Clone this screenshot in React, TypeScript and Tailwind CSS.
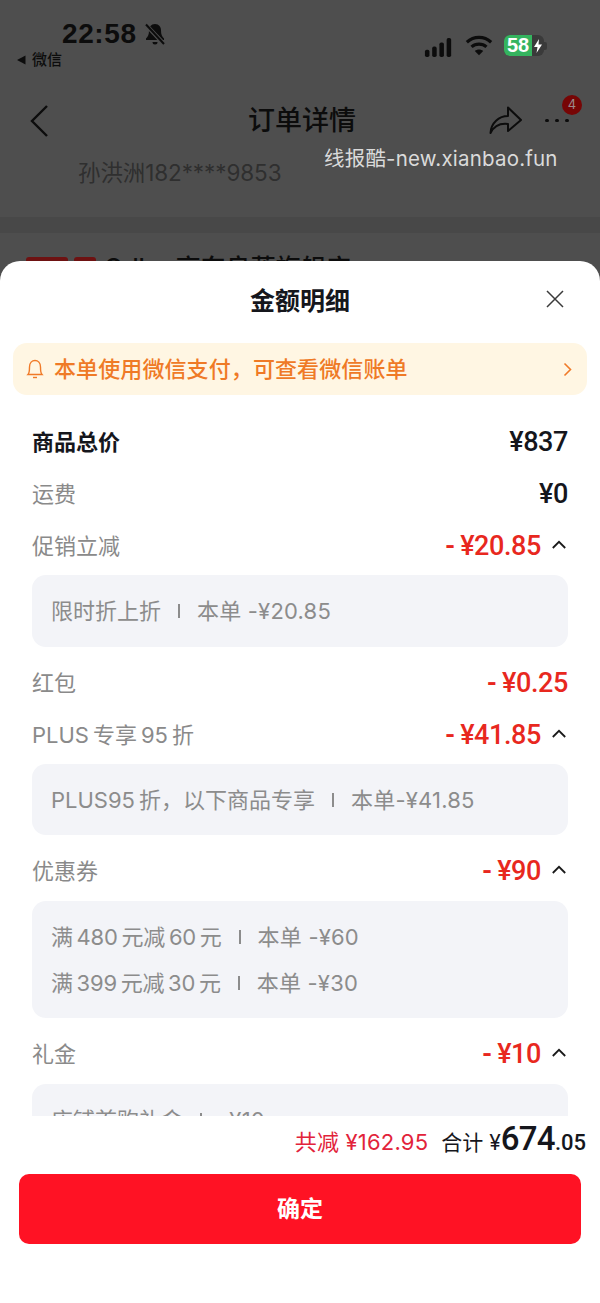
import React from "react";

const font = "font-['Inter','Noto_Sans_CJK_SC',sans-serif]";

function Chevron() {
  return (
    <svg width="14" height="9" viewBox="0 0 14 9" fill="none" stroke="#1a1a1a" strokeWidth="1.8" className="ml-[11px] mr-[2px] mb-[4px]">
      <path d="M0.800 8 L7 1.800 L13.200 8" />
    </svg>
  );
}

function Row({ label, value, strong, red, open }: { label: string; value: string; strong?: boolean; red?: boolean; open?: boolean }) {
  return (
    <div className="flex h-[52px] items-center justify-between">
      <span className={strong ? "text-[22px] font-bold text-[#15161c]" : "text-[22px] text-[#8a8a8a]"}>{label}</span>
      <span className="flex items-center">
        {red && <span className="mr-[5px] font-['Roboto',sans-serif] text-[26px] font-bold leading-[32px] text-[#e8281e]">-</span>}
        <span className={`font-['Roboto',sans-serif] text-[27px] font-medium leading-[32px] tracking-[-0.4px] ${red ? "text-[#e8281e]" : "text-[#15161c]"}`}>{value}</span>
        {open && <Chevron />}
      </span>
    </div>
  );
}

function Line({ left, right, tight }: { left: string; right: string; tight?: boolean }) {
  return (
    <div className="flex items-center gap-[17px] whitespace-pre">
      <span className={tight ? "tracking-[-0.2px]" : ""}>{left}</span>
      <span className="h-[14px] w-[2px] bg-[#8c8c8c]" />
      <span className="tracking-[0.2px]">{right}</span>
    </div>
  );
}

function Box({ children, className }: { children: React.ReactNode; className: string }) {
  return (
    <div className={`flex flex-col justify-center gap-[18px] rounded-[14px] bg-[#f3f4f8] pl-[19px] text-[22px] leading-[28px] text-[#8c8c8c] ${className}`}>
      {children}
    </div>
  );
}

export default function App() {
  return (
    <div className={`flex h-[1303px] w-[600px] flex-col overflow-hidden bg-[#4e4e4e] ${font}`}>
      <div className="relative h-[261px] shrink-0 overflow-hidden">
        <div className="flex h-[87px] justify-between pl-[16px] pr-[53px]">
          <div className="pt-[18px]">
            <div className="flex items-center pl-[46px]">
              <span className="font-['Liberation_Sans',sans-serif] text-[28px] font-bold leading-[32px] tracking-[0.6px] text-[#0c0c0c]">22:58</span>
              <svg width="24" height="25" viewBox="0 0 24 24" className="ml-[6px]" fill="#0c0c0c" stroke="none">
                <path d="M12 1.500c-4 0-6 3-6 6.500 0 4-1 6-3 8v1.500h18V16c-2-2-3-4-3-8 0-3.500-2-6.500-6-6.500z" />
                <path d="M9.500 19.500h5a2.500 2.500 0 0 1-5 0z" />
                <path d="M2.500 2 L21.500 22" stroke="#4e4e4e" strokeWidth="4" />
                <path d="M3 2 L21 21.500" stroke="#0c0c0c" strokeWidth="2" />
              </svg>
            </div>
            <div className="flex items-center">
              <svg width="10" height="10" viewBox="0 0 10 10" fill="#0c0c0c"><path d="M9.500 0.500V9.500L1 5z" /></svg>
              <span className="ml-[6px] text-[15px] font-medium leading-[20px] text-[#0c0c0c]">微信</span>
            </div>
          </div>
          <div className="flex items-start gap-[11px] pt-[35px]">
            <svg width="31" height="19" viewBox="0 0 30 21" fill="#0c0c0c" className="mt-[3px]">
              <rect x="0" y="13" width="5" height="8" rx="2" />
              <rect x="8" y="9.500" width="5" height="11.500" rx="2" />
              <rect x="16" y="5" width="5" height="16" rx="2" />
              <rect x="24" y="0" width="5" height="21" rx="2" />
            </svg>
            <svg width="28" height="21" viewBox="0 0 30 22" fill="none" stroke="#0c0c0c" strokeWidth="3.400">
              <path d="M2 7.500 C9.500 0.500 20.500 0.500 28 7.500" />
              <path d="M7 12.500 C11.500 8.500 18.500 8.500 23 12.500" />
              <path d="M15 21.500 L10.500 17 C13 14.800 17 14.800 19.500 17 Z" fill="#0c0c0c" stroke="none" />
            </svg>
            <div className="flex items-center">
              <div className="relative flex h-[21px] w-[40px] items-center overflow-hidden rounded-[6px] bg-[#3a3a3a]">
                <div className="h-full w-[28px] bg-[#35b45f]" />
                <span className="absolute left-[3px] top-0 font-['Liberation_Sans',sans-serif] text-[20px] font-bold leading-[21px] text-white">58</span>
                <svg width="10" height="14" viewBox="0 0 10 14" fill="white" className="absolute right-[1px] top-[4px]"><path d="M6 0 L1 8 H4.500 L3.500 14 L9 5.500 H5.500 Z" /></svg>
              </div>
              <div className="h-[8px] w-[3px] rounded-r-[2px] bg-[#3a3a3a]" />
            </div>
          </div>
        </div>
        <div className="relative flex h-[68px] items-center justify-center">
          <svg width="20" height="34" viewBox="0 0 20 34" fill="none" stroke="#0c0c0c" strokeWidth="2.400" className="absolute left-[29px] top-[17px]">
            <path d="M18 2 L3 17 L18 32" />
          </svg>
          <span className="ml-[4px] text-[27px] font-medium leading-[36px] text-[#0c0c0c]">订单详情</span>
          <svg width="34" height="32" viewBox="0 0 34 32" fill="none" stroke="#0c0c0c" strokeWidth="2" strokeLinejoin="round" className="absolute left-[489px] top-[18px]">
            <path d="M1.500 28 C2 18 10 11 19 11 V2.500 L32 15 L19 26 V19 C11 18 5 21 1.500 28 Z" />
          </svg>
          <div className="absolute left-[545px] top-[32px] flex gap-[6px]">
            <span className="h-[3px] w-[4px] rounded-full bg-[#0c0c0c]" />
            <span className="h-[3px] w-[4px] rounded-full bg-[#0c0c0c]" />
            <span className="h-[3px] w-[4px] rounded-full bg-[#0c0c0c]" />
          </div>
          <div className="absolute left-[562px] top-[8px] flex h-[20px] w-[20px] items-center justify-center rounded-full bg-[#770505] text-[13px] text-[#9a8a8a]">4</div>
        </div>
        <div className="pl-[78px] text-[22.5px] leading-[36px] tracking-[-0.1px] text-[#2f2f2f]">孙洪洲182****9853</div>
        <div className="mt-[26px] h-[16px] bg-[#484848]" />
        <div className="flex items-center gap-[6px] pl-[26px] pt-[19px]">
          <span className="h-[22px] w-[42px] rounded-[3px] bg-[#6e1212]" />
          <span className="h-[22px] w-[22px] rounded-[3px] bg-[#6e1212]" />
          <span className="ml-[2px] text-[25px] font-medium leading-[32px] text-[#0c0c0c]">Odbo 高东良莲旗舰店</span>
        </div>
        <div className="absolute left-[324px] top-[145px] text-[20.5px] leading-[28px] tracking-[0.2px] text-[#dadada]">线报酷-new.xianbao.fun</div>
      </div>

      <div className="flex min-h-0 flex-1 flex-col rounded-t-[20px] bg-white">
        <div className="relative flex h-[82px] shrink-0 items-center justify-center">
          <span className="text-[25px] font-bold text-[#15161c]">金额明细</span>
          <svg width="18" height="18" viewBox="0 0 18 18" stroke="#3a3a3a" strokeWidth="1.500" className="absolute left-[546px] top-[29px]">
            <path d="M1 1 L17 17 M17 1 L1 17" />
          </svg>
        </div>
        <div className="mx-[13px] flex h-[52px] shrink-0 items-center rounded-[14px] bg-[#fff6e3] pl-[13px] pr-[15px]">
          <svg width="18" height="20" viewBox="0 0 18 20" fill="none" stroke="#f07a28" strokeWidth="1.400">
            <path d="M2 15.500 C3.500 14 3.500 11 3.500 8 C3.500 4 6 1.500 9 1.500 C12 1.500 14.500 4 14.500 8 C14.500 11 14.500 14 16 15.500 Z" />
            <path d="M7 18.500 H11" />
          </svg>
          <span className="ml-[10px] flex-1 text-[22px] font-medium tracking-[0.1px] text-[#ef7a26]">本单使用微信支付，可查看微信账单</span>
          <svg width="9" height="15" viewBox="0 0 9 15" fill="none" stroke="#f07a28" strokeWidth="1.600">
            <path d="M1.500 1.500 L7.500 7.500 L1.500 13.500" />
          </svg>
        </div>
        <div className="mt-[21px] h-[700px] shrink-0 overflow-hidden px-[32px]">
          <Row label="商品总价" value="¥837" strong />
          <Row label="运费" value="¥0" />
          <Row label="促销立减" value="¥20.85" red open />
          <Box className="mt-[3px] h-[72px]"><Line left="限时折上折" right="本单 -¥20.85" /></Box>
          <div className="h-[10px]" />
          <Row label="红包" value="¥0.25" red />
          <Row label={"PLUS\u2009专享\u200995\u2009折"} value="¥41.85" red open />
          <Box className="mt-[3px] h-[71px]"><Line left={"PLUS95\u2009折，以下商品专享"} right="本单-¥41.85" /></Box>
          <div className="h-[10px]" />
          <Row label="优惠券" value="¥90" red open />
          <Box className="mt-[4px] h-[117px]">
            <Line tight left={"满\u2009480\u2009元减\u200960\u2009元"} right="本单 -¥60" />
            <Line tight left={"满\u2009399\u2009元减\u200930\u2009元"} right="本单 -¥30" />
          </Box>
          <div className="h-[10px]" />
          <Row label="礼金" value="¥10" red open />
          <Box className="mt-[4px] h-[72px]"><Line left="店铺首购礼金" right="-¥10" /></Box>
        </div>
        <div className="flex h-[52px] shrink-0 items-baseline justify-end pr-[14px]">
          <span className="text-[22px] tracking-[0.2px] text-[#e2233a]">共减 ¥162.95</span>
          <span className="ml-[13px] text-[21px] text-[#15161c]">合计 ¥</span>
          <span className="font-['Roboto',sans-serif] text-[33px] font-medium leading-[46px] tracking-[-0.7px] text-[#15161c]">674</span>
          <span className="font-['Roboto',sans-serif] text-[22px] font-medium text-[#15161c]">.05</span>
        </div>
        <div className="h-[6px] shrink-0" />
        <button className="mx-[19px] flex h-[70px] shrink-0 items-center justify-center rounded-[10px] bg-[#ff1224] text-[23px] font-bold text-white">确定</button>
      </div>
    </div>
  );
}
